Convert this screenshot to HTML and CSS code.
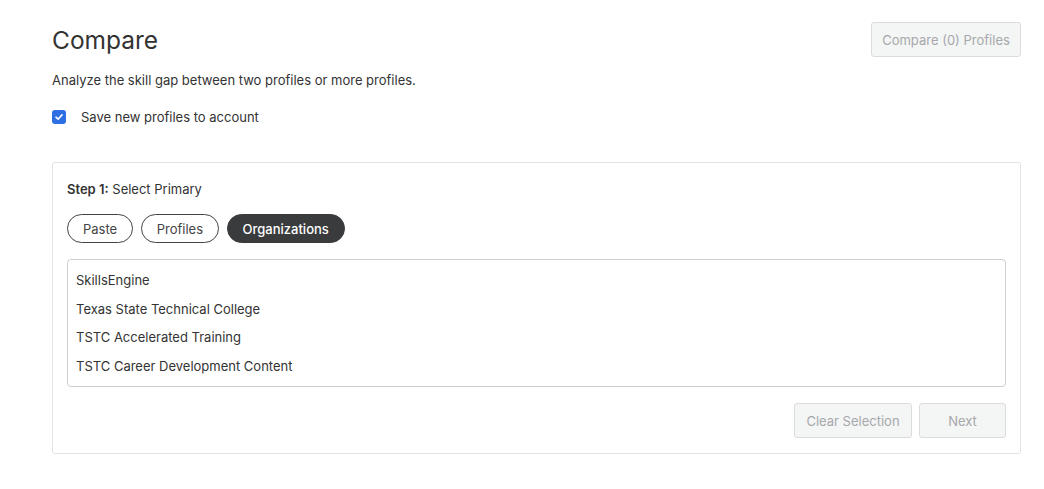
FILE: index.html
```html
<!DOCTYPE html>
<html>
<head>
<meta charset="utf-8">
<link rel="stylesheet" href="styles.css">
</head>
<body>
<div class="page">
  <div class="header">
    <h1 class="title">Compare</h1>
    <button class="btn btn-disabled btn-compare">Compare (0) Profiles</button>
  </div>
  <p class="subtitle">Analyze the skill gap between two profiles or more profiles.</p>
  <label class="check-row">
    <span class="checkbox"><svg width="10" height="10" viewBox="0 0 10 10"><path d="M2 5.2 L4.1 7.2 L8 2.9" fill="none" stroke="#fff" stroke-width="1.6" stroke-linecap="round" stroke-linejoin="round"/></svg></span>
    <span>Save new profiles to account</span>
  </label>
  <div class="panel">
    <div class="step"><strong>Step 1:</strong> Select Primary</div>
    <div class="pills">
      <button class="pill">Paste</button>
      <button class="pill">Profiles</button>
      <button class="pill pill-active">Organizations</button>
    </div>
    <div class="list">
      <div class="item">SkillsEngine</div>
      <div class="item">Texas State Technical College</div>
      <div class="item">TSTC Accelerated Training</div>
      <div class="item">TSTC Career Development Content</div>
    </div>
    <div class="actions">
      <button class="btn btn-disabled btn-clear">Clear Selection</button>
      <button class="btn btn-disabled btn-next">Next</button>
    </div>
  </div>
</div>
</body>
</html>
```
FILE: styles.css
```css
* { box-sizing: border-box; }
body {
  margin: 0;
  background: #fff;
  font-family: Inter, "Noto Sans", Arial, sans-serif;
  color: #333;
}
.page {
  padding: 22px 23px 0 52px;
}
.header {
  display: flex;
  justify-content: space-between;
  align-items: flex-start;
}
.title {
  margin: 4px 0 0 0;
  font-size: 24.5px;
  font-weight: 400;
  color: #333;
  line-height: 28px;
}
.btn {
  font-family: inherit;
  font-size: 13px;
  border-radius: 3px;
  border: 1px solid #dcdcdc;
  background: #f4f5f5;
  color: #a6a8ab;
  height: 35px;
  padding: 0 11px;
}
.btn-compare { width: 150px; padding: 0; }
.subtitle {
  margin: 14px 0 0 0;
  font-size: 13px;
  line-height: 18px;
  color: #333;
}
.check-row {
  display: flex;
  align-items: center;
  margin-top: 20px;
  font-size: 13px;
  color: #333;
}
.checkbox {
  width: 14px;
  height: 14px;
  border-radius: 3px;
  background: #2f6fe4;
  display: flex;
  align-items: center;
  justify-content: center;
  margin-right: 15px;
}
.panel {
  margin-top: 37px;
  border: 1px solid #e3e3e3;
  border-radius: 3px;
  padding: 18px 14px 14px 14px;
  height: 292px;
}
.step {
  font-size: 13px;
  line-height: 17px;
  color: #333;
}
.step strong { font-weight: 600; }
.pills {
  display: flex;
  gap: 7.5px;
  margin-top: 16px;
}
.pill {
  font-family: inherit;
  font-size: 13px;
  height: 29px;
  padding: 0 15px;
  border: 1px solid #444;
  border-radius: 15px;
  background: #fff;
  color: #444;
}
.pill-active {
  background: #3a3b3d;
  border-color: #3a3b3d;
  color: #fff;
  font-weight: 500;
}
.list {
  margin-top: 16px;
  border: 1px solid #cfcfcf;
  border-radius: 4px;
  height: 128px;
  padding: 11px 8px 10px 8px;
}
.item {
  font-size: 13px;
  line-height: 18px;
  margin-bottom: 10.7px;
  color: #333;
}
.actions {
  display: flex;
  justify-content: flex-end;
  gap: 7px;
  margin-top: 16px;
}
.btn-clear { width: 118px; padding: 0; }
.btn-next { width: 87px; padding: 0; }
```
